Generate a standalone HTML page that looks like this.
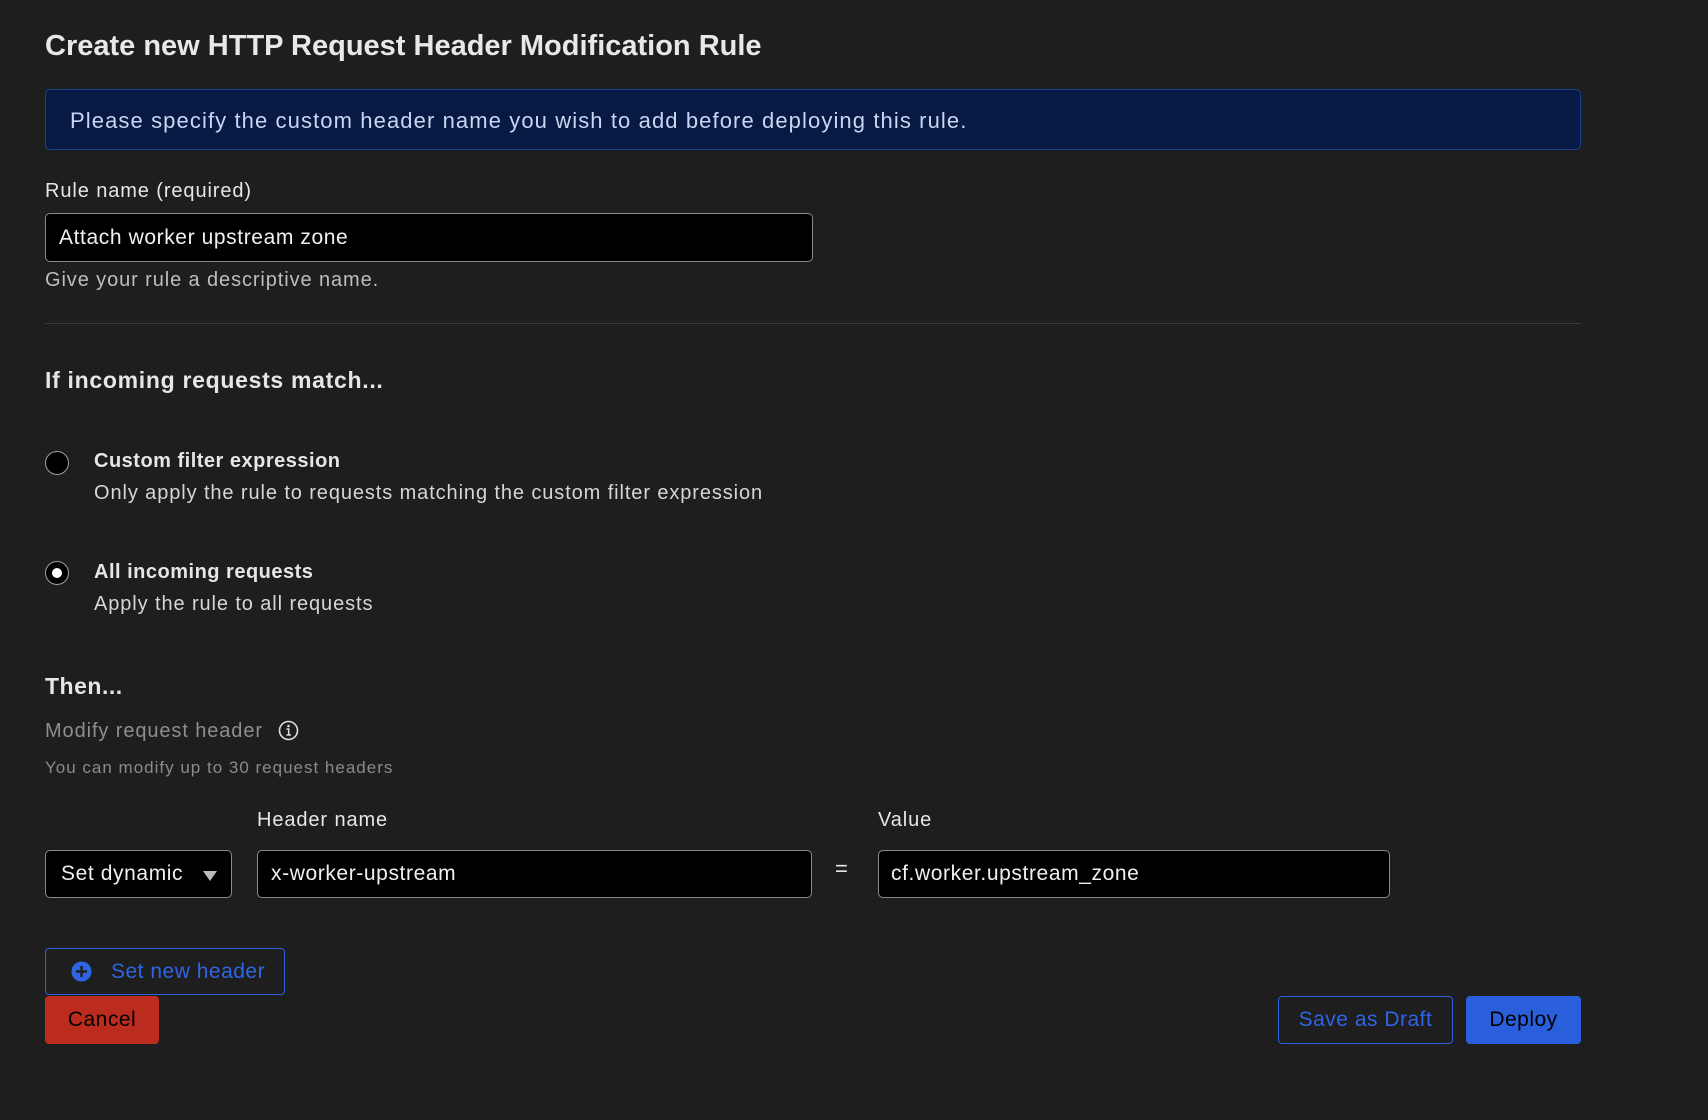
<!DOCTYPE html>
<html><head><meta charset="utf-8"><style>
*{box-sizing:border-box;margin:0;padding:0}
body{width:1708px;height:1120px;background:#1e1e1e;font-family:"Liberation Sans",sans-serif;color:#e6e6e6;position:relative;overflow:hidden}
.a{position:absolute;white-space:nowrap}
.t{letter-spacing:0.9px}
.inp{position:absolute;background:#000;border:1px solid #8a8a8a;border-radius:5px;font-size:21px;color:#f0f0f0;display:flex;align-items:center;padding-left:13px;letter-spacing:0.6px}
.radio{position:absolute;width:24px;height:24px;border-radius:50%;border:1.5px solid #a0a0a0;background:#000}
.btn{position:absolute;border-radius:4px;display:flex;align-items:center;justify-content:center;font-size:21px;letter-spacing:0.5px}
</style></head><body>
<div class="a" style="left:45px;top:30px;font-size:29px;font-weight:bold;color:#e8e8e8">Create new HTTP Request Header Modification Rule</div>
<div class="a" style="left:45px;top:89px;width:1536px;height:61px;background:#061a43;border:1px solid #1c3e8c;border-radius:5px;font-size:22px;color:#c9d5f2;padding:18px 0 0 24px;letter-spacing:1.1px">Please specify the custom header name you wish to add before deploying this rule.</div>
<div class="a t" style="left:45px;top:180px;font-size:20px">Rule name (required)</div>
<div class="inp" style="left:45px;top:213px;width:768px;height:49px">Attach worker upstream zone</div>
<div class="a t" style="left:45px;top:269px;font-size:20px;color:#bdbdbd">Give your rule a descriptive name.</div>
<div class="a" style="left:45px;top:323px;width:1536px;height:1px;background:#3a3a3a"></div>
<div class="a" style="left:45px;top:367px;font-size:23px;font-weight:bold;letter-spacing:0.7px">If incoming requests match...</div>
<div class="radio" style="left:45px;top:451px"></div>
<div class="a" style="left:94px;top:450px;font-size:20px;font-weight:bold;letter-spacing:0.5px">Custom filter expression</div>
<div class="a t" style="left:94px;top:482px;font-size:20px;color:#d6d6d6">Only apply the rule to requests matching the custom filter expression</div>
<div class="radio" style="left:45px;top:561px;display:flex;align-items:center;justify-content:center"><div style="width:10px;height:10px;border-radius:50%;background:#fff"></div></div>
<div class="a" style="left:94px;top:561px;font-size:20px;font-weight:bold;letter-spacing:0.5px">All incoming requests</div>
<div class="a t" style="left:94px;top:593px;font-size:20px;color:#d6d6d6">Apply the rule to all requests</div>
<div class="a" style="left:45px;top:673px;font-size:23px;font-weight:bold;letter-spacing:0.5px">Then...</div>
<div class="a t" style="left:45px;top:720px;font-size:20px;color:#8e8e8e">Modify request header</div>
<svg class="a" style="left:278px;top:720px" width="21" height="21" viewBox="0 0 21 21"><circle cx="10.5" cy="10.5" r="9" fill="none" stroke="#ddd" stroke-width="1.6"/><circle cx="10.5" cy="6" r="1.3" fill="#ddd"/><path d="M8.5 9h2.2v6M8.5 15h4.5" stroke="#ddd" stroke-width="1.5" fill="none"/></svg>
<div class="a" style="left:45px;top:758px;font-size:17px;color:#8a8a8a;letter-spacing:1px">You can modify up to 30 request headers</div>
<div class="a t" style="left:257px;top:809px;font-size:20px">Header name</div>
<div class="a t" style="left:878px;top:809px;font-size:20px">Value</div>
<div class="inp" style="left:45px;top:850px;width:187px;height:48px;padding-left:15px">Set dynamic<svg style="position:absolute;right:14px;top:20px" width="14" height="10"><path d="M0 0h14L7 10z" fill="#bbb"/></svg></div>
<div class="inp" style="left:257px;top:850px;width:555px;height:48px">x-worker-upstream</div>
<div class="a" style="left:835px;top:856px;font-size:22px">=</div>
<div class="inp" style="left:878px;top:850px;width:512px;height:48px;padding-left:12px">cf.worker.upstream_zone</div>
<div class="btn" style="left:45px;top:948px;width:240px;height:47px;border:1.5px solid #2c5fd8;color:#2f64e4;justify-content:flex-start;padding-left:25px"><svg width="21" height="21" viewBox="0 0 21 21" style="margin-right:19px"><circle cx="10.5" cy="10.5" r="10" fill="#2f64e4"/><path d="M10.5 5v11M5 10.5h11" stroke="#1e1e1e" stroke-width="2.4"/></svg>Set new header</div>
<div class="btn" style="left:45px;top:996px;width:114px;height:48px;background:#bb2c1f;color:#000">Cancel</div>
<div class="btn" style="left:1278px;top:996px;width:175px;height:48px;border:1.5px solid #2c5fd8;color:#2f64e4">Save as Draft</div>
<div class="btn" style="left:1466px;top:996px;width:115px;height:48px;background:#2a5fdb;color:#000">Deploy</div>
</body></html>
